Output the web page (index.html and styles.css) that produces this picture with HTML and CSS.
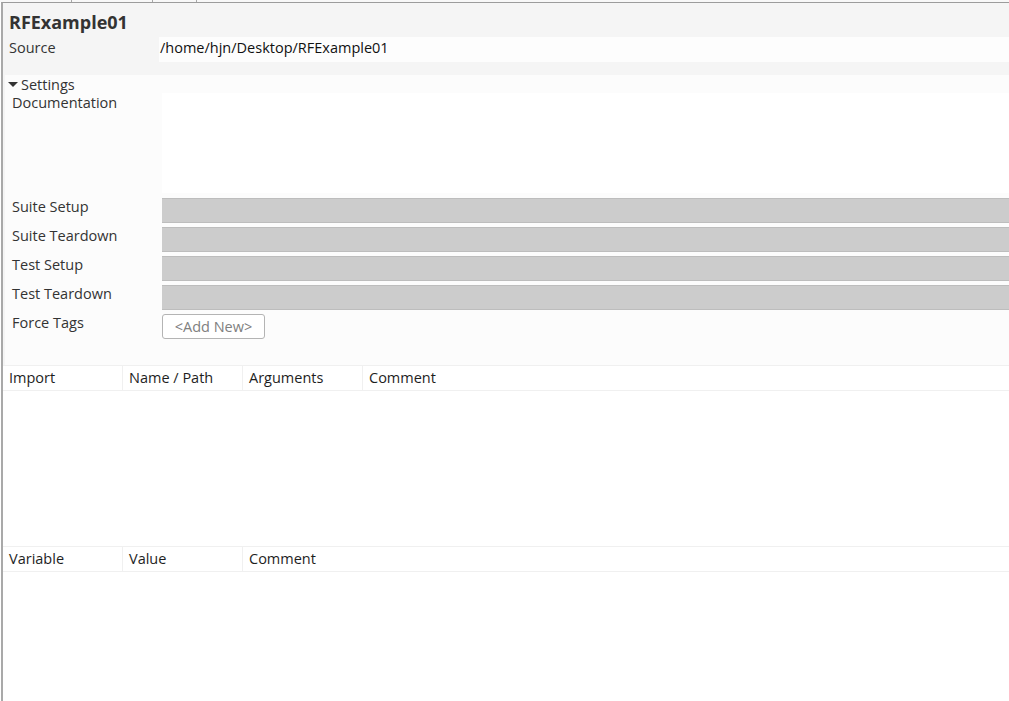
FILE: index.html
```html
<!DOCTYPE html>
<html lang="en">

<head>
  <meta charset="UTF-8">
  <title>RFExample01</title>
  <link rel="stylesheet" href="styles.css">
</head>

<body>
  <div class="tabs">
    <span class="tab tab-first"></span>
    <span class="tab tab-second"></span>
    <span class="tab tab-third"></span>
  </div>
  <div class="frame">
    <div class="editor">
      <h1 class="title">RFExample01</h1>
      <div class="source-row">
        <span class="source-label">Source</span>
        <span class="source-value">/home/hjn/Desktop/RFExample01</span>
      </div>

      <div class="settings">
        <div class="settings-header"><span class="arrow"></span>Settings</div>
        <div class="setting doc-row">
          <span class="label">Documentation</span>
          <div class="doc-field"></div>
        </div>
        <div class="setting">
          <span class="label">Suite Setup</span>
          <div class="field"></div>
        </div>
        <div class="setting">
          <span class="label">Suite Teardown</span>
          <div class="field"></div>
        </div>
        <div class="setting">
          <span class="label">Test Setup</span>
          <div class="field"></div>
        </div>
        <div class="setting">
          <span class="label">Test Teardown</span>
          <div class="field"></div>
        </div>
        <div class="setting">
          <span class="label">Force Tags</span>
          <button class="add-new">&lt;Add New&gt;</button>
        </div>
      </div>
    </div>

    <div class="grid imports">
      <div class="grid-header">
        <span class="col">Import</span>
        <span class="col">Name / Path</span>
        <span class="col">Arguments</span>
        <span class="col col-last">Comment</span>
      </div>
    </div>

    <div class="grid variables">
      <div class="grid-header">
        <span class="col">Variable</span>
        <span class="col">Value</span>
        <span class="col col-last">Comment</span>
      </div>
    </div>
  </div>
</body>

</html>
```

FILE: styles.css
```css
html,
body {
  height: 100%;
}

body {
  margin: 0;
  background-color: white;
  font-family: "Open Sans", "DejaVu Sans", sans-serif;
  font-size: 14.5px;
  color: #333;
  overflow: hidden;
}

.tabs {
  display: flex;
  height: 2px;
  background-color: #f8f8f8;
}

.tab {
  height: 2px;
  border-right: 1px solid #a8a8a8;
}

.tab-first {
  width: 71px;
}

.tab-second {
  width: 80px;
}

.tab-third {
  width: 43px;
}

.frame {
  margin-left: 1px;
  border-left: 2px solid #a9a9a9;
  border-top: 1px solid #9c9c9c;
  height: calc(100% - 3px);
  box-shadow: inset 0 3px 0 #b8b8b8;
}

.editor {
  background-color: #f5f5f5;
  padding-top: 4px;
}

.title {
  margin: 0;
  padding: 0 6px;
  height: 30px;
  line-height: 30px;
  font-size: 18px;
  font-weight: bold;
  color: #333;
}

.source-row {
  display: flex;
  height: 25px;
  line-height: 22px;
}

.source-label {
  width: 150px;
  padding-left: 6px;
}

.source-value {
  flex: 1;
  padding-left: 1px;
  background-color: #fdfdfd;
  color: #111;
}

.settings {
  margin: 13px 0 0 2px;
  background-color: #fcfcfc;
  padding-bottom: 22px;
}

.settings-header {
  display: flex;
  align-items: center;
  height: 18px;
  padding-left: 3px;
  color: #333;
}

.arrow {
  width: 0;
  height: 0;
  border-left: 5px solid transparent;
  border-right: 5px solid transparent;
  border-top: 5px solid #333;
  margin-right: 3px;
}

.setting {
  display: flex;
  margin-bottom: 4px;
}

.label {
  width: 150px;
  padding-left: 7px;
  line-height: 18px;
}

.doc-row {
  margin-bottom: 5px;
}

.doc-row .label {
  padding-top: 1px;
}

.doc-field {
  flex: 1;
  height: 100px;
  background-color: white;
}

.field {
  flex: 1;
  height: 23px;
  background-color: #cccccc;
  border-top: 1px solid #bdbdbd;
  border-bottom: 1px solid #bdbdbd;
}

.add-new {
  width: 103px;
  height: 25px;
  padding: 0;
  background-color: white;
  border: 1px solid #b4b4b4;
  border-radius: 3px;
  font-family: inherit;
  font-size: 14.5px;
  color: #808080;
}

.grid {
  background-color: white;
}

.imports {
  height: 181px;
}

.grid-header {
  display: flex;
  height: 24px;
  line-height: 24px;
  border-top: 1px solid #f0f0f0;
  border-bottom: 1px solid #f0f0f0;
  color: #1e1e1e;
}

.col {
  width: 113px;
  padding-left: 6px;
  border-right: 1px solid #f0f0f0;
}

.col-last {
  flex: 1;
  border-right: none;
}
```
